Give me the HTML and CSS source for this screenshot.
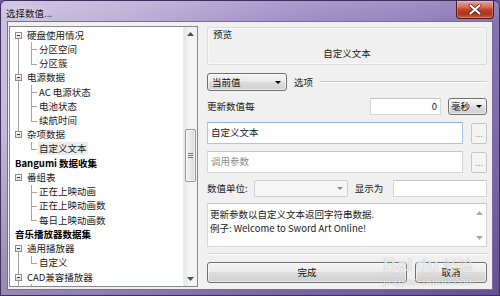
FILE: index.html
```html
<!DOCTYPE html>
<html>
<head>
<meta charset="utf-8">
<link rel="stylesheet" href="styles.css">
</head>
<body>
<div class="window">
  <div class="titlebar">
    <span class="title">选择数值...</span>
    <div class="close">
      <svg width="14" height="11" viewBox="0 0 14 11"><path d="M2.5 1.5 L11.5 9.5 M11.5 1.5 L2.5 9.5" stroke="#5a1a12" stroke-width="3.6" stroke-linecap="round"/><path d="M2.5 1.5 L11.5 9.5 M11.5 1.5 L2.5 9.5" stroke="#ffffff" stroke-width="2.2" stroke-linecap="round"/></svg>
    </div>
  </div>
  <div class="client">
    <div class="tree">
      <div class="rows">
        <div class="row r1 down"><span class="box"></span><span class="lbl">硬盘使用情况</span></div>
        <div class="row r2 thru"><span class="conn"></span><span class="lbl">分区空间</span></div>
        <div class="row r2 thru last"><span class="conn"></span><span class="lbl">分区簇</span></div>
        <div class="row r1 up down"><span class="box"></span><span class="lbl">电源数据</span></div>
        <div class="row r2 thru"><span class="conn"></span><span class="lbl">AC 电源状态</span></div>
        <div class="row r2 thru"><span class="conn"></span><span class="lbl">电池状态</span></div>
        <div class="row r2 thru last"><span class="conn"></span><span class="lbl">续航时间</span></div>
        <div class="row r1 up"><span class="box"></span><span class="lbl">杂项数据</span></div>
        <div class="row r2 last"><span class="conn"></span><span class="lbl sel">自定义文本</span></div>
        <div class="row r0"><span class="lbl">Bangumi 数据收集</span></div>
        <div class="row r1"><span class="box"></span><span class="lbl">番组表</span></div>
        <div class="row r2"><span class="conn"></span><span class="lbl">正在上映动画</span></div>
        <div class="row r2"><span class="conn"></span><span class="lbl">正在上映动画数</span></div>
        <div class="row r2 last"><span class="conn"></span><span class="lbl">每日上映动画数</span></div>
        <div class="row r0"><span class="lbl">音乐播放器数据集</span></div>
        <div class="row r1 down"><span class="box"></span><span class="lbl">通用播放器</span></div>
        <div class="row r2 thru last"><span class="conn"></span><span class="lbl">自定义</span></div>
        <div class="row r1 up down"><span class="box"></span><span class="lbl">CAD兼容播放器</span></div>
        <div class="row r2 thru stub"><span class="conn"></span></div>
      </div>
      <div class="vscroll">
        <div class="sarrow"><svg width="7" height="4" viewBox="0 0 7 4"><path d="M0 4 L3.5 0 L7 4 Z" fill="#505050"/></svg></div>
        <div class="strack">
          <div class="thumb"><span class="grip"></span></div>
        </div>
        <div class="sarrow"><svg width="7" height="4" viewBox="0 0 7 4"><path d="M0 0 L3.5 4 L7 0 Z" fill="#505050"/></svg></div>
      </div>
    </div>
    <div class="panel">
      <div class="preview">
        <div class="plabel">预览</div>
        <div class="ptext">自定义文本</div>
      </div>
      <div class="line-opt">
        <div class="combo btn cur"><span>当前值</span><svg width="6" height="3" viewBox="0 0 6 3"><path d="M0 0 L6 0 L3 3 Z" fill="#000"/></svg></div>
        <span class="optlbl">选项</span>
        <div class="rule"></div>
      </div>
      <div class="line-upd">
        <span class="lab">更新数值每</span>
        <div class="tb num">0</div>
        <div class="combo btn ms"><span>毫秒</span><svg width="6" height="3" viewBox="0 0 6 3"><path d="M0 0 L6 0 L3 3 Z" fill="#000"/></svg></div>
      </div>
      <div class="line-in">
        <div class="tb wide focus">自定义文本</div>
        <div class="dots">...</div>
      </div>
      <div class="line-in second">
        <div class="tb wide ph">调用参数</div>
        <div class="dots">...</div>
      </div>
      <div class="line-unit">
        <span class="lab">数值单位:</span>
        <div class="combo flat"><svg width="6" height="3" viewBox="0 0 6 3"><path d="M0 0 L6 0 L3 3 Z" fill="#8a8a8a"/></svg></div>
        <span class="lab show">显示为</span>
        <div class="tb unit"></div>
      </div>
      <div class="desc">
        <div class="dtext">更新参数以自定义文本返回字符串数据.<br>例子: Welcome to Sword Art Online!</div>
        <div class="dscroll">
          <svg width="7" height="4" viewBox="0 0 7 4"><path d="M0 4 L3.5 0 L7 4 Z" fill="#a8a8a8"/></svg>
          <svg width="7" height="4" viewBox="0 0 7 4"><path d="M0 0 L3.5 4 L7 0 Z" fill="#a8a8a8"/></svg>
        </div>
      </div>
      <div class="sep"></div>
      <div class="buttons">
        <div class="pbtn ok">完成</div>
        <div class="pbtn cancel">取消</div>
      </div>
    </div>
  </div>
  <div class="watermark">
    <div class="wm-top"><span class="wm-bai">Bai</span><span class="wm-du">du</span><span class="wm-jy">经验</span></div>
    <div class="wm-url">jingyan.baidu.com</div>
  </div>
</div>
</body>
</html>
```

FILE: styles.css
```css
* { box-sizing: border-box; }
html, body { margin: 0; padding: 0; }
body {
  width: 500px;
  height: 296px;
  overflow: hidden;
  font-family: "Noto Sans CJK SC", "Noto Sans", sans-serif;
  font-size: 9.5px;
  color: #1a1a1a;
  background: #6d5a9c;
}

.window {
  position: relative;
  width: 500px;
  height: 296px;
  border: 1px solid #3d2f5c;
  border-radius: 6px 6px 0 0;
  background:
    linear-gradient(180deg, rgba(255,255,255,0.18) 0%, rgba(255,255,255,0.05) 8%, rgba(0,0,0,0) 40%, rgba(40,20,80,0.3) 100%),
    linear-gradient(90deg, #c6bbdb 0%, #b8aad4 25%, #a594c9 45%, #9886c2 60%, #8e7bbb 80%, #7f6bad 100%);
  display: flex;
  flex-direction: column;
  overflow: hidden;
}

.titlebar {
  height: 20px;
  display: flex;
  align-items: flex-start;
  flex: none;
}
.title {
  margin: 5px 0 0 5px;
  line-height: 14px;
  color: #111;
  text-shadow: 0 0 6px rgba(255,255,255,0.9);
}
.close {
  margin-left: auto;
  margin-right: 5px;
  width: 38px;
  height: 18px;
  border: 1px solid #4c1c16;
  border-top: none;
  border-radius: 0 0 4px 4px;
  background: linear-gradient(180deg, #e6a597 0%, #d8705d 35%, #c0412c 50%, #b0301d 75%, #c65a40 100%);
  box-shadow: inset 0 0 0 1px rgba(255,255,255,0.25);
  display: flex;
  align-items: center;
  justify-content: center;
}

.client {
  flex: none;
  height: 269px;
  margin: 0 6px 5px 6px;
  border: 1px solid #7a6c9c;
  background: #f0f0f0;
  display: flex;
  gap: 9px;
  padding: 4px 5px 2px 1px;
  overflow: hidden;
}

/* tree */
.tree {
  width: 189px;
  height: 261px;
  flex: none;
  border: 1px solid #828790;
  background: #fff;
  display: flex;
  overflow: hidden;
}
.rows {
  flex: 1;
  padding-top: 1px;
  overflow: hidden;
}
.row {
  position: relative;
  height: 14.24px;
  display: flex;
  align-items: center;
  white-space: nowrap;
  line-height: 13px;
}
.r0 { padding-left: 4px; font-weight: bold; color: #000; }
.r1 { padding-left: 5px; }
.r2 { padding-left: 21px; }
.box {
  position: relative;
  width: 7px;
  height: 7px;
  border: 1px solid #8f8f8f;
  background: linear-gradient(180deg, #ffffff, #dedede);
  margin-right: 4px;
  flex: none;
}
.box::after {
  content: "";
  position: absolute;
  left: 1px;
  top: 2px;
  width: 3px;
  height: 1px;
  background: #303030;
}
.r1.up::before {
  content: "";
  position: absolute;
  left: 8px;
  top: 0;
  height: calc(50% - 3.5px);
  width: 1px;
  background: #a5a5a5;
}
.r1.down::after {
  content: "";
  position: absolute;
  left: 8px;
  top: calc(50% + 3.5px);
  bottom: 0;
  width: 1px;
  background: #a5a5a5;
}
.r2.thru::before {
  content: "";
  position: absolute;
  left: 8px;
  top: 0;
  bottom: 0;
  width: 1px;
  background: #a5a5a5;
}
.conn {
  position: relative;
  width: 6px;
  height: 100%;
  margin-right: 1px;
  flex: none;
}
.conn::before {
  content: "";
  position: absolute;
  left: 0;
  top: 0;
  bottom: 0;
  width: 1px;
  background: #a5a5a5;
}
.last .conn::before { bottom: 50%; }
.conn::after {
  content: "";
  position: absolute;
  left: 0;
  top: 50%;
  width: 6px;
  height: 1px;
  background: #a5a5a5;
}
.stub .conn::after { display: none; }
.lbl { padding: 0 1px; }
.lbl.sel { background: #ececec; }

.vscroll {
  width: 14px;
  flex: none;
  display: flex;
  flex-direction: column;
  background: linear-gradient(90deg, #e6e6e6 0%, #f4f4f4 40%, #f2f2f2 100%);
  border-left: 1px solid #ececec;
}
.sarrow {
  height: 14px;
  display: flex;
  align-items: center;
  justify-content: center;
  flex: none;
}
.strack { flex: 1; padding-top: 88px; }
.thumb {
  margin: 0 1px;
  height: 53px;
  border: 1px solid #979797;
  border-radius: 2px;
  background: linear-gradient(90deg, #f2f2f2 0%, #e8e8e8 50%, #d6d6d6 100%);
  box-shadow: inset 0 0 0 1px rgba(255,255,255,0.7);
  display: flex;
  align-items: center;
  justify-content: center;
}
.grip {
  width: 5px;
  height: 5px;
  border-top: 1px solid #777;
  border-bottom: 1px solid #777;
  background: linear-gradient(#777, #777) center / 5px 1px no-repeat;
}

/* panel */
.panel {
  width: 280px;
  flex: none;
  display: flex;
  flex-direction: column;
}
.preview {
  margin-top: 1px;
  height: 38px;
  border: 1px solid #dadada;
  border-radius: 2px;
  box-shadow: inset 0 0 0 1px #f8f8f8;
  padding: 0 5px;
  display: flex;
  flex-direction: column;
}
.plabel { line-height: 13px; color: #1a1a1a; }
.ptext { text-align: center; line-height: 13px; margin-top: 6px; color: #1a1a1a; }

.line-opt {
  margin-top: 8px;
  height: 18px;
  display: flex;
  align-items: center;
}
.combo {
  display: flex;
  align-items: center;
  justify-content: space-between;
  padding: 0 5px 0 4px;
}
.btn {
  border: 1px solid #707070;
  border-radius: 3px;
  background: linear-gradient(180deg, #f4f4f4 0%, #ebebeb 45%, #dddddd 50%, #cfcfcf 100%);
  box-shadow: inset 0 0 0 1px rgba(255,255,255,0.6);
  color: #111;
  line-height: 13px;
}
.cur { width: 80px; height: 18px; }
.optlbl { margin-left: 7px; line-height: 13px; }
.rule {
  flex: 1;
  margin-left: 7px;
  height: 2px;
  border-top: 1px solid #c8c8c8;
  border-bottom: 1px solid #ffffff;
}

.line-upd {
  margin-top: 7px;
  height: 17px;
  display: flex;
  align-items: center;
}
.lab { line-height: 13px; color: #1a1a1a; }
.tb {
  background: #fff;
  border: 1px solid #d6d6d6;
  border-top-color: #c4c4c4;
  line-height: 13px;
}
.num {
  margin-left: auto;
  width: 71px;
  height: 17px;
  text-align: right;
  padding: 1px 3px 0 0;
}
.ms {
  margin-left: 7px;
  width: 39px;
  height: 17px;
  padding: 0 4px 0 2px;
}

.line-in {
  margin-top: 7px;
  height: 22px;
  display: flex;
  align-items: center;
}
.wide {
  width: 256px;
  height: 22px;
  padding: 3px 0 0 3px;
}
.focus { border-color: #a7c8e8; border-top-color: #8fb6df; }
.ph { color: #8c8c8c; }
.dots {
  margin-left: 8px;
  width: 16px;
  height: 21px;
  border: 1px solid #c6c6c6;
  border-radius: 2px;
  background: #f4f4f4;
  color: #9a9a9a;
  font-size: 9px;
  line-height: 19px;
  text-align: center;
}

.line-unit {
  margin-top: 7px;
  height: 17px;
  display: flex;
  align-items: center;
}
.flat {
  margin-left: 6px;
  width: 94px;
  height: 17px;
  border: 1px solid #cfcfcf;
  border-radius: 2px;
  background: #f6f6f6;
  justify-content: flex-end;
  padding-right: 4px;
}
.show { margin-left: 7px; }
.unit { margin-left: auto; width: 94px; height: 17px; }

.desc {
  margin-top: 6px;
  height: 44px;
  border: 1px solid #d6d6d6;
  border-top-color: #c6c6c6;
  background: #fff;
  display: flex;
}
.dtext {
  flex: 1;
  padding: 3px 0 0 2px;
  line-height: 14px;
  color: #1a1a1a;
}
.dscroll {
  width: 13px;
  display: flex;
  flex-direction: column;
  justify-content: space-between;
  align-items: center;
  padding: 7px 0 6px 0;
}

.sep {
  margin-top: 6px;
  height: 2px;
  border-top: 1px solid #d4d4d4;
  border-bottom: 1px solid #ffffff;
}
.buttons {
  margin-top: 7px;
  height: 21px;
  display: flex;
  justify-content: space-between;
}
.pbtn {
  height: 21px;
  border: 1px solid #707070;
  border-radius: 3px;
  background: linear-gradient(180deg, #f4f4f4 0%, #ebebeb 45%, #dddddd 50%, #cfcfcf 100%);
  box-shadow: inset 0 0 0 1px rgba(255,255,255,0.6);
  text-align: center;
  line-height: 19px;
  color: #111;
}
.ok { width: 200px; }
.cancel { width: 72px; }

/* baidu watermark over content */
.watermark {
  position: absolute;
  left: 382px;
  top: 246px;
  width: 110px;
  color: rgba(255,255,255,0.75);
  font-family: "Liberation Sans", sans-serif;
  text-shadow: 0 0 1px rgba(0,0,0,0.3);
  pointer-events: none;
}
.wm-top { display: flex; align-items: flex-end; height: 28px; }
.wm-bai { font-size: 19px; font-weight: bold; line-height: 20px; }
.wm-du { font-size: 19px; font-weight: bold; line-height: 20px; margin-left: 3px; }
.wm-jy { font-family: "Noto Sans CJK SC", sans-serif; font-size: 15px; line-height: 20px; margin-left: 4px; }
.wm-url { font-size: 11px; line-height: 12px; letter-spacing: 0.2px; }
```
